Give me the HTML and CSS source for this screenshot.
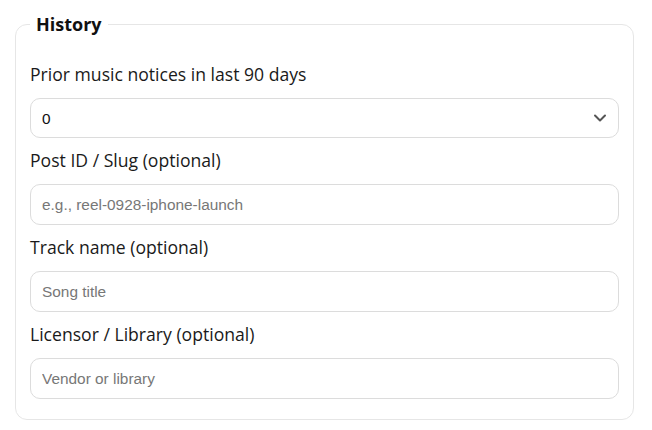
FILE: index.html
```html
<!DOCTYPE html>
<html lang="en">
<head>
    <meta charset="UTF-8">
    <meta name="viewport" content="width=device-width, initial-scale=1.0">
    <title>History</title>
    <link rel="stylesheet" href="styles.css">
</head>
<body>
    <fieldset class="group">
        <legend>History</legend>

        <div class="field">
            <label for="prior">Prior music notices in last 90 days</label>
            <div class="select-wrap">
                <select id="prior">
                    <option>0</option>
                    <option>1</option>
                    <option>2</option>
                    <option>3+</option>
                </select>
                <svg class="chevron" width="14" height="10" viewBox="0 0 14 10">
                    <path d="M2 2.5 L7 7.5 L12 2.5" fill="none" stroke="#555" stroke-width="2" stroke-linecap="round" stroke-linejoin="round"/>
                </svg>
            </div>
        </div>

        <div class="field">
            <label for="post">Post ID / Slug (optional)</label>
            <input id="post" type="text" placeholder="e.g., reel-0928-iphone-launch">
        </div>

        <div class="field">
            <label for="track">Track name (optional)</label>
            <input id="track" type="text" placeholder="Song title">
        </div>

        <div class="field">
            <label for="licensor">Licensor / Library (optional)</label>
            <input id="licensor" type="text" placeholder="Vendor or library">
        </div>
    </fieldset>
</body>
</html>
```

FILE: styles.css
```css
body {
    margin: 0;
    padding: 12px 18px 0 15px;
    background-color: #fff;
    font-family: "Open Sans", sans-serif;
    color: #1a1a1a;
}

.group {
    margin: 0;
    padding: 25px 14px 20px 14px;
    border: 1px solid #e6e6e6;
    border-radius: 12px;
}

.group legend {
    padding: 0 6px;
    font-size: 18px;
    font-weight: 700;
    line-height: 24px;
    color: #111;
}

.field {
    display: flex;
    flex-direction: column;
    margin-bottom: 9px;
}

.field:last-child {
    margin-bottom: 0;
}

.field label {
    font-size: 17.6px;
    line-height: 26px;
    margin-bottom: 11px;
}

.field input,
.field select {
    box-sizing: border-box;
    width: 100%;
    height: 41px;
    padding: 0 11px;
    border: 1px solid #dcdcdc;
    border-radius: 10px;
    background-color: #fff;
    font-family: "Liberation Sans", Arial, sans-serif;
    font-size: 15.4px;
    color: #111;
    outline: none;
}

.field input::placeholder {
    color: #777;
}

.select-wrap {
    position: relative;
}

.field select {
    appearance: none;
    -webkit-appearance: none;
    height: 40px;
}

.chevron {
    position: absolute;
    right: 12px;
    top: 15px;
    pointer-events: none;
}
```
